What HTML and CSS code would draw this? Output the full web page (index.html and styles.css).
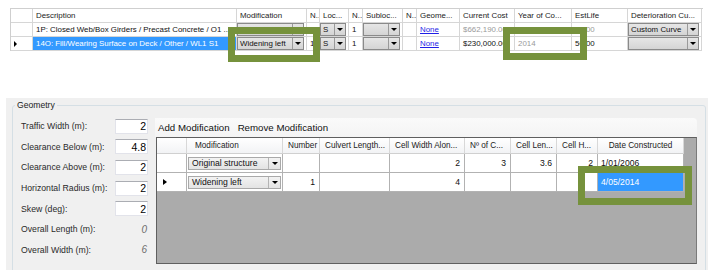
FILE: index.html
```html
<!DOCTYPE html>
<html lang="en">
<head>
    <meta charset="UTF-8">
    <title>Asset components - Geometry</title>
    <link rel="stylesheet" href="styles.css">
</head>
<body>
    <div class="screen">
        <div class="asset-area">
            <div class="asset-grid">
                <div class="asset-row head">
                    <div class="cell row-head"></div>
                    <div class="cell">Description</div>
                    <div class="cell">Modification</div>
                    <div class="cell">N..</div>
                    <div class="cell">Loc...</div>
                    <div class="cell">N..</div>
                    <div class="cell">Subloc...</div>
                    <div class="cell">N..</div>
                    <div class="cell">Geome...</div>
                    <div class="cell">Current Cost</div>
                    <div class="cell">Year of Co...</div>
                    <div class="cell">EstLife</div>
                    <div class="cell">Deterioration Cu...</div>
                </div>
                <div class="asset-row">
                    <div class="cell row-head"></div>
                    <div class="cell">1P: Closed Web/Box Girders / Precast Concrete / O1 ...</div>
                    <div class="cell boxed"><div class="combo"><span class="combo-text">Original struc...</span><span class="combo-btn"></span></div></div>
                    <div class="cell">1</div>
                    <div class="cell boxed"><div class="combo"><span class="combo-text">S</span><span class="combo-btn"></span></div></div>
                    <div class="cell">1</div>
                    <div class="cell boxed"><div class="combo"><span class="combo-text"></span><span class="combo-btn"></span></div></div>
                    <div class="cell"></div>
                    <div class="cell"><a class="link">None</a></div>
                    <div class="cell muted">$662,190.00</div>
                    <div class="cell muted">1996</div>
                    <div class="cell muted">50.00</div>
                    <div class="cell boxed"><div class="combo"><span class="combo-text">Custom Curve</span><span class="combo-btn"></span></div></div>
                </div>
                <div class="asset-row">
                    <div class="cell row-head"><span class="marker"></span></div>
                    <div class="cell selected">14O: Fill/Wearing Surface on Deck / Other / WL1 S1</div>
                    <div class="cell boxed"><div class="combo"><span class="combo-text">Widening left</span><span class="combo-btn"></span></div></div>
                    <div class="cell">1</div>
                    <div class="cell boxed"><div class="combo"><span class="combo-text">S</span><span class="combo-btn"></span></div></div>
                    <div class="cell">1</div>
                    <div class="cell boxed"><div class="combo"><span class="combo-text"></span><span class="combo-btn"></span></div></div>
                    <div class="cell"></div>
                    <div class="cell"><a class="link">None</a></div>
                    <div class="cell">$230,000.00</div>
                    <div class="cell muted">2014</div>
                    <div class="cell">50.00</div>
                    <div class="cell boxed"><div class="combo"><span class="combo-text"></span><span class="combo-btn"></span></div></div>
                </div>
            </div>
        </div>

        <div class="geometry-panel">
            <fieldset class="geometry">
                <legend>Geometry</legend>
                <div class="geometry-body">
                    <div class="fields">
                        <div class="field"><label>Traffic Width (m):</label><input class="num-box" value="2"></div>
                        <div class="field"><label>Clearance Below (m):</label><input class="num-box" value="4.8"></div>
                        <div class="field"><label>Clearance Above (m):</label><input class="num-box" value="2"></div>
                        <div class="field"><label>Horizontal Radius (m):</label><input class="num-box" value="2"></div>
                        <div class="field"><label>Skew (deg):</label><input class="num-box" value="2"></div>
                        <div class="field"><label>Overall Length (m):</label><span class="readout">0</span></div>
                        <div class="field"><label>Overall Width (m):</label><span class="readout">6</span></div>
                    </div>

                    <div class="mods">
                        <div class="toolstrip">
                            <button class="tool">Add Modification</button>
                            <button class="tool">Remove Modification</button>
                        </div>
                        <div class="mod-grid">
                            <div class="mod-row head">
                                <div class="mcell row-head"></div>
                                <div class="mcell left">Modification</div>
                                <div class="mcell right">Number</div>
                                <div class="mcell">Culvert Length...</div>
                                <div class="mcell">Cell Width Alon...</div>
                                <div class="mcell">Nº of C...</div>
                                <div class="mcell">Cell Len...</div>
                                <div class="mcell">Cell H...</div>
                                <div class="mcell center">Date Constructed</div>
                            </div>
                            <div class="mod-row">
                                <div class="mcell row-head"></div>
                                <div class="mcell boxed"><div class="combo soft"><span class="combo-text">Original structure</span><span class="combo-btn"></span></div></div>
                                <div class="mcell num"></div>
                                <div class="mcell num"></div>
                                <div class="mcell num">2</div>
                                <div class="mcell num">3</div>
                                <div class="mcell num">3.6</div>
                                <div class="mcell num">2</div>
                                <div class="mcell">1/01/2006</div>
                            </div>
                            <div class="mod-row">
                                <div class="mcell row-head"><span class="marker"></span></div>
                                <div class="mcell boxed"><div class="combo soft"><span class="combo-text">Widening left</span><span class="combo-btn"></span></div></div>
                                <div class="mcell num">1</div>
                                <div class="mcell num"></div>
                                <div class="mcell num">4</div>
                                <div class="mcell num"></div>
                                <div class="mcell num"></div>
                                <div class="mcell num"></div>
                                <div class="mcell selected">4/05/2014</div>
                            </div>
                        </div>
                    </div>
                </div>
            </fieldset>
        </div>

        <!-- highlight frames drawn over the screenshot -->
        <div class="callout callout-mod"></div>
        <div class="callout callout-year"></div>
        <div class="callout callout-date"></div>
    </div>
</body>
</html>
```

FILE: styles.css
```css
body {
    margin: 0;
    background-color: white;
    font-family: 'Liberation Sans', Arial, sans-serif;
    color: #111;
}
.screen {
    position: relative;
    width: 714px;
    height: 270px;
    overflow: hidden;
}

/* top asset grid */
.asset-area {
    height: 98px;
    padding: 8px 0 0 10px;
    box-sizing: border-box;
}
.asset-grid {
    width: 692px;
    border-top: 1px solid #cfcfcf;
    border-left: 1px solid #cfcfcf;
    font-size: 7.9px;
}
.asset-row {
    display: grid;
    grid-template-columns: 22px 204px 70px 13px 29px 14px 40px 14px 43px 55px 57px 56px 74px;
    height: 14px;
}
.asset-row .cell {
    box-sizing: border-box;
    border-right: 1px solid #d6d6d6;
    border-bottom: 1px solid #d6d6d6;
    padding: 0 3px;
    line-height: 13px;
    white-space: nowrap;
    overflow: hidden;
}
.asset-row.head .cell {
    color: #222;
}
.asset-row .cell.boxed {
    padding: 0 2px 0 0;
}
.asset-row .cell.row-head {
    display: flex;
    align-items: center;
    padding-left: 3px;
}
.asset-row .cell.selected {
    background-color: #3399ff;
    color: white;
}
.muted {
    color: #9a9a9a;
}
.link {
    color: #1f1fe6;
    text-decoration: underline;
}

.marker {
    width: 0;
    height: 0;
    border-left: 3px solid #000;
    border-top: 3px solid transparent;
    border-bottom: 3px solid transparent;
}

/* combo boxes */
.combo {
    display: flex;
    height: 100%;
    box-sizing: border-box;
    border: 1px solid #8a8a8a;
    background: linear-gradient(#e6e6e6, #d4d4d4);
}
.combo-text {
    flex: 1;
    min-width: 0;
    padding-left: 2px;
    line-height: 11px;
    overflow: hidden;
    white-space: nowrap;
}
.combo-btn {
    width: 10px;
    border-left: 1px solid #9a9a9a;
    display: flex;
    align-items: center;
    justify-content: center;
}
.combo-btn::after {
    content: '';
    border-left: 3px solid transparent;
    border-right: 3px solid transparent;
    border-top: 3px solid #000;
}
.combo.soft {
    border-color: #a9a9a9;
    background: linear-gradient(#f3f3f3, #e3e3e3);
}
.combo.soft .combo-text {
    line-height: 11px;
    padding-left: 3px;
}
.combo.soft .combo-btn {
    width: 11px;
    border-left-color: #b4b4b4;
}

/* geometry group */
.geometry-panel {
    margin-left: 6px;
    width: 702px;
    height: 172px;
    background-color: #f0f0f0;
    overflow: hidden;
}
.geometry {
    margin: 2px 2px 0 6px;
    padding: 0;
    min-width: 0;
    height: 200px;
    border: 1px solid #d5dfe5;
    border-radius: 3px;
}
.geometry legend {
    margin-left: 2px;
    padding: 0 2px;
    font-size: 8.6px;
    line-height: 11px;
    color: #222;
}
.geometry-body {
    display: flex;
    padding: 5px 0 0 8px;
}
.fields {
    width: 127px;
}
.field {
    display: flex;
    align-items: center;
    height: 20.6px;
    font-size: 8.7px;
    color: #2a2a2a;
}
.field label {
    width: 94px;
}
.num-box {
    width: 33px;
    height: 15px;
    box-sizing: border-box;
    margin: 0;
    padding: 0 1px 0 0;
    border: 1px solid #e2e3ea;
    border-top-color: #abadb3;
    background-color: white;
    font-family: 'Liberation Sans', Arial, sans-serif;
    font-size: 10.5px;
    text-align: right;
    color: #000;
}
.readout {
    width: 33px;
    padding-right: 1px;
    box-sizing: border-box;
    text-align: right;
    font-size: 10px;
    font-style: italic;
    color: #6d6d6d;
}

/* modifications */
.mods {
    margin: 2px 0 0 7px;
    width: 542px;
}
.toolstrip {
    display: flex;
    align-items: center;
    gap: 8px;
    height: 19px;
    padding-left: 3px;
    background: linear-gradient(#fafafa, #f4f4f4);
    border-radius: 0 4px 0 0;
}
.tool {
    margin: 0;
    padding: 0;
    border: none;
    background: none;
    font-family: 'Liberation Sans', Arial, sans-serif;
    font-size: 9.7px;
    color: #111;
}
.mod-grid {
    margin-left: 1px;
    width: 541px;
    height: 127px;
    box-sizing: border-box;
    border: 1px solid #5f5f5f;
    border-right-color: #7a7a7a;
    background-color: #ababab;
}
.mod-row {
    display: grid;
    grid-template-columns: 30px 96px 37px 70px 75px 46px 46px 41px 86px;
    width: 527px;
    height: 19px;
}
.mod-row.head {
    height: 16px;
}
.mcell {
    box-sizing: border-box;
    border-right: 1px solid #b2b2b2;
    border-bottom: 1px solid #b2b2b2;
    background-color: white;
    padding: 0 3px;
    font-size: 8.6px;
    line-height: 18px;
    white-space: nowrap;
    overflow: hidden;
}
.mod-row.head .mcell {
    background: linear-gradient(#ffffff, #f2f3f5);
    border-right-color: #d8d8d8;
    border-bottom-color: #d0d0d0;
    font-size: 8.2px;
    line-height: 15px;
    padding: 0 5px;
    color: #222;
}
.mod-row.head .mcell.left {
    padding-left: 8px;
}
.mod-row.head .mcell.right {
    text-align: right;
    padding-right: 2px;
}
.mod-row.head .mcell.center {
    text-align: center;
}
.mcell.num {
    text-align: right;
    padding-right: 4px;
}
.mcell.boxed {
    padding: 3px 1px 2px 1px;
}
.mcell.row-head {
    display: flex;
    align-items: center;
    padding-left: 6px;
}
.mcell.row-head .marker {
    border-left-width: 4px;
}
.mcell.selected {
    background-color: #3399ff;
    color: white;
}

/* green highlight frames */
.callout {
    position: absolute;
    border: 7px solid #76923c;
    box-sizing: border-box;
}
.callout-mod {
    left: 228px;
    top: 27px;
    width: 92px;
    height: 35px;
}
.callout-year {
    left: 503px;
    top: 27px;
    width: 84px;
    height: 33px;
}
.callout-date {
    left: 578px;
    top: 166px;
    width: 114px;
    height: 39px;
}
```
